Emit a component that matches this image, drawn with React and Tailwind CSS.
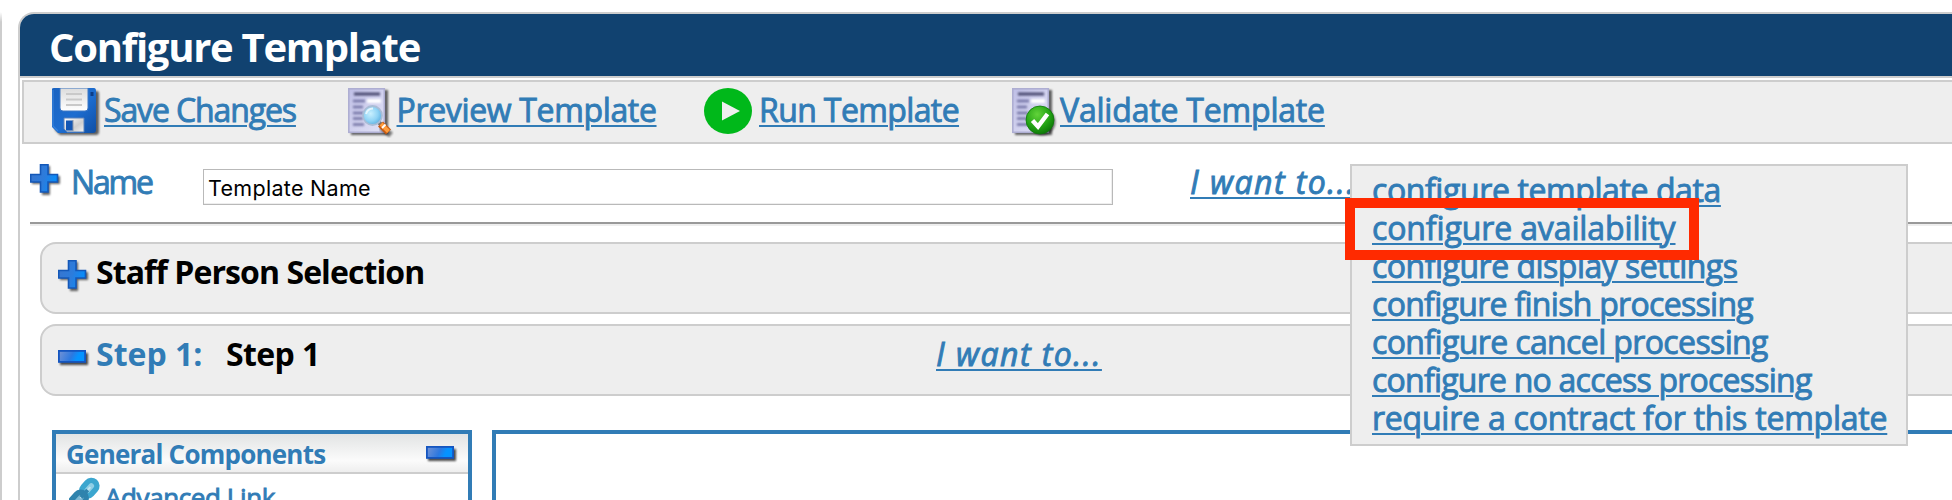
const LINK = "text-[32px] leading-[38px] text-[#317cb6] underline decoration-2 underline-offset-[3px] [-webkit-text-stroke:0.9px_#317cb6]";

function SaveIcon() {
  return (
    <svg width="50" height="50" viewBox="0 0 50 50">
      <defs>
        <linearGradient id="disk" x1="0" y1="0" x2="1" y2="1">
          <stop offset="0" stopColor="#1b63c0" /><stop offset=".55" stopColor="#1d6dd0" /><stop offset="1" stopColor="#0f4fa5" />
        </linearGradient>
        <linearGradient id="paper" x1="0" y1="0" x2="0" y2="1">
          <stop offset="0" stopColor="#dcdcdc" /><stop offset="1" stopColor="#fff" />
        </linearGradient>
        <linearGradient id="shutter" x1="0" y1="0" x2="1" y2="1">
          <stop offset="0" stopColor="#fff" /><stop offset=".6" stopColor="#cfcfcf" /><stop offset="1" stopColor="#f3f3f3" />
        </linearGradient>
        <filter id="soft" x="-20%" y="-20%" width="150%" height="150%"><feGaussianBlur stdDeviation="1.2" /></filter>
      </defs>
      <path d="M3 3H45Q47 3 47 6V44Q47 47 44 47H8L3 42Z" fill="#000" opacity=".6" filter="url(#soft)" />
      <path d="M0 1Q0 0 2 0H42Q44 0 44 3V42Q44 45 41 45H6L0 39Z" fill="url(#disk)" />
      <path d="M1 2V38L6 43" fill="none" stroke="#4a93e8" strokeWidth="1.2" opacity=".6" />
      <path d="M8 0H36V20Q36 23 33 23H11Q8 23 8 20Z" fill="url(#paper)" stroke="#3f78c4" />
      <path d="M14 6H30M14 11.500H30M14 17H30" stroke="#c9c9c9" strokeWidth="2.200" />
      <rect x="38.500" y="4" width="3" height="4" fill="#0b3c87" />
      <path d="M12 30H32V44H15L12 41Z" fill="url(#shutter)" stroke="#5a82bb" />
      <rect x="14" y="32.500" width="7" height="10" fill="#1256b4" />
      <path d="M21 32V43" stroke="#8b96a8" strokeWidth="1" />
    </svg>
  );
}

function Sheet({ id, children }) {
  return (
    <svg width="46" height="50" viewBox="0 0 46 50">
      <defs>
        <linearGradient id={`${id}-page`} x1="0" y1="0" x2="1" y2="1">
          <stop offset="0" stopColor="#bfbfe6" /><stop offset="1" stopColor="#e2e2f6" />
        </linearGradient>
        <radialGradient id={`${id}-lens`} cx=".4" cy=".4" r=".65">
          <stop offset="0" stopColor="#c9f0ff" /><stop offset=".6" stopColor="#8fd3f5" /><stop offset="1" stopColor="#5aaee0" />
        </radialGradient>
        <radialGradient id={`${id}-ball`} cx=".4" cy=".3" r=".75">
          <stop offset="0" stopColor="#62d33a" /><stop offset=".6" stopColor="#23a314" /><stop offset="1" stopColor="#0c7307" />
        </radialGradient>
        <filter id={`${id}-soft`} x="-20%" y="-20%" width="150%" height="150%"><feGaussianBlur stdDeviation="1.200" /></filter>
        <filter id={`${id}-fade`} x="-20%" y="-20%" width="150%" height="150%"><feGaussianBlur stdDeviation=".8" /></filter>
      </defs>
      <rect x="3" y="2" width="37" height="45" fill="#000" opacity=".6" filter={`url(#${id}-soft)`} />
      <rect x=".8" y=".8" width="35.500" height="43.500" fill={`url(#${id}-page)`} stroke="#aeaed2" strokeWidth="1.600" />
      <g filter={`url(#${id}-fade)`}>
        <path d="M19 13H33" stroke="#fff" strokeWidth="4" />
        <path d="M6 6H32" stroke="#4c4c70" strokeWidth="3" />
        <path d="M5 13H17M5 19H15M5 25H16M5 30.500H15M5 36.500H16" stroke="#7373a4" strokeWidth="2.400" />
      </g>
      {children}
    </svg>
  );
}

function PreviewIcon() {
  return (
    <Sheet id="preview">
      <path d="M33 39L43 47" stroke="#000" strokeWidth="6" opacity=".5" filter="url(#preview-soft)" />
      <path d="M30.500 34L33.500 37" stroke="#777" strokeWidth="4" />
      <path d="M32.500 36L40.500 44" stroke="#c75c14" strokeWidth="7" />
      <path d="M33 36L40.500 43.500" stroke="#ff9c3c" strokeWidth="4" />
      <path d="M34 40L37.500 36.500" stroke="#fff" strokeWidth="1.800" />
      <circle cx="24.500" cy="27.500" r="9.500" fill="url(#preview-lens)" stroke="#a9bdd6" strokeWidth="1.800" />
      <path d="M18 26Q19.500 20.500 25 20.500" fill="none" stroke="#fff" strokeWidth="2" opacity=".7" />
    </Sheet>
  );
}

function ValidateIcon() {
  return (
    <Sheet id="validate">
      <circle cx="30" cy="34" r="13.500" fill="#000" opacity=".5" filter="url(#validate-soft)" />
      <circle cx="28" cy="32" r="14" fill="url(#validate-ball)" stroke="#0e7a0a" strokeWidth=".8" />
      <path d="M20.500 32.500L26 38.500L35.500 26" fill="none" stroke="#fff" strokeWidth="4.400" />
    </Sheet>
  );
}

function RunIcon() {
  return (
    <svg width="48" height="46" viewBox="0 0 48 46">
      <ellipse cx="24" cy="23" rx="24" ry="23" fill="#00b81a" />
      <path d="M18 13.500L36 23L18 32.500Z" fill="#efefef" />
    </svg>
  );
}

function PlusIcon({ id }) {
  return (
    <svg width="32" height="33" viewBox="0 0 32 33" className="shrink-0">
      <defs>
        <linearGradient id={id} x1="0" y1="0" x2="1" y2=".3">
          <stop offset="0" stopColor="#3a74cc" /><stop offset=".6" stopColor="#2c7cdc" /><stop offset="1" stopColor="#0a8cf8" />
        </linearGradient>
        <filter id={`${id}-soft`} x="-20%" y="-20%" width="150%" height="150%"><feGaussianBlur stdDeviation="1.200" /></filter>
      </defs>
      <path d="M12 2H20V12H30V20H20V31H12V20H2V12H12Z" fill="#000" opacity=".6" filter={`url(#${id}-soft)`} />
      <path d="M10.500 .7H18V10.500H27.500V18H18V28H10.500V18H.7V10.500H10.500Z" fill={`url(#${id})`} stroke="#1458b8" strokeWidth="1.600" />
    </svg>
  );
}

function MinusIcon({ id }) {
  return (
    <svg width="32" height="18" viewBox="0 0 32 18" className="shrink-0">
      <defs>
        <linearGradient id={id} x1="0" y1="0" x2="1" y2=".2">
          <stop offset="0" stopColor="#7593d4" /><stop offset=".55" stopColor="#2c78e0" /><stop offset=".8" stopColor="#0593ff" />
        </linearGradient>
        <filter id={`${id}-soft`} x="-20%" y="-30%" width="150%" height="180%"><feGaussianBlur stdDeviation="1.200" /></filter>
      </defs>
      <rect x="2" y="3" width="28" height="12" fill="#000" opacity=".7" filter={`url(#${id}-soft)`} />
      <rect x=".9" y=".9" width="26.200" height="11" fill={`url(#${id})`} stroke="#1455c0" strokeWidth="1.800" />
    </svg>
  );
}

function LinkIcon() {
  return (
    <svg width="32" height="34" viewBox="0 0 32 34" className="shrink-0">
      <g fill="none" transform="rotate(-48 16 16)">
        <rect x="14" y="10.500" width="17" height="11" rx="5.500" fill="#8fcfe6" stroke="#3ba6cf" strokeWidth="5.500" />
        <rect x="-4" y="10.500" width="19" height="11" rx="5.500" fill="#7fb9d4" stroke="#2f83ad" strokeWidth="5.500" />
        <path d="M9 16H24" stroke="#bfe4f1" strokeWidth="2" />
        <path d="M10 16H20" stroke="#2f83ad" strokeWidth="4" />
      </g>
    </svg>
  );
}

const tools = [
  { label: "Save Changes", Icon: SaveIcon, group: "w-[296px]", icon: "w-[52px]", text: "tracking-[-1.12px]" },
  { label: "Preview Template", Icon: PreviewIcon, group: "w-[356px]", icon: "w-[48.5px]", text: "tracking-[-0.34px]" },
  { label: "Run Template", Icon: RunIcon, group: "w-[308px]", icon: "w-[55px]", text: "tracking-[-0.61px]" },
  { label: "Validate Template", Icon: ValidateIcon, group: "w-[340px]", icon: "w-[48px]", text: "tracking-[-0.19px]" },
];

const menu = [
  ["configure template data", "tracking-[-0.4px]"],
  ["configure availability", "tracking-[-0.12px]"],
  ["configure display settings", "tracking-[-0.5px]"],
  ["configure finish processing", "tracking-[-0.7px]"],
  ["configure cancel processing", "tracking-[-0.62px]"],
  ["configure no access processing", "tracking-[-0.77px]"],
  ["require a contract for this template", "tracking-[-0.22px]"],
];

function ActionsMenu() {
  return (
    <div className="absolute top-[164px] left-[1350px] h-[282px] w-[558px] border-2 border-[#cdcdcd] bg-[#eeeeee] pt-[5px] pl-5">
      {menu.map(([label, tracking]) => (
        <div key={label} className="flex h-[38px]"><a className={`${LINK} ${tracking}`}>{label}</a></div>
      ))}
      <div className="absolute top-[32px] left-[-7px] h-[62px] w-[354px] border-10 border-[#ff2a00]" />
    </div>
  );
}

export default function App() {
  return (
    <div className="relative flex h-[500px] w-[1952px] overflow-hidden bg-white font-['Open_Sans','Noto_Sans',sans-serif] whitespace-nowrap">
      <div className="mt-3 w-[2px] shrink-0 rounded-tr-[2px] bg-linear-to-b from-white to-[#cdcdcd] to-[10px]" />
      <main className="mt-3 ml-4 w-[1960px] shrink-0 rounded-tl-[16px] border-2 border-r-0 border-b-0 border-[#cdcdcd]">
        <header className="h-[64px] rounded-tl-[14px] border-b-2 border-[#cdcdcd] bg-[#114270] pt-[2px] pl-[29px]">
          <h1 className="text-[40px] leading-[62px] font-bold tracking-[-1.28px] text-white">Configure Template</h1>
        </header>

        <nav className="mt-[2px] ml-[2px] flex h-[64px] border-2 border-[#cdcdcd] bg-[#eeeeee] pt-[6px] pl-7">
          {tools.map(({ label, Icon, group, icon, text }) => (
            <div key={label} className={`flex ${group}`}>
              <span className={`shrink-0 ${icon}`}><Icon /></span>
              <a className={`mt-[3px] h-[38px] ${LINK} ${text}`}>{label}</a>
            </div>
          ))}
        </nav>

        <section className="ml-[10px] flex h-[78px] pt-5">
          <PlusIcon id="plus-name" />
          <span className="mt-[-1px] ml-[9px] w-[132px] text-[32px] leading-[38px] tracking-[-2.2px] text-[#317cb6] [-webkit-text-stroke:0.9px_#317cb6]">Name</span>
          <div className="mt-[5px] flex h-[36px] w-[910px] items-center border border-[#b9b9b9] pt-[2px] pl-1 font-['Inter'] text-[21.5px] tracking-[0.3px] text-black shadow-[inset_-1px_-1px_0_#eeeeee]">
            Template Name
          </div>
          <a className={`mt-[-1px] ml-[77px] italic tracking-[1.5px] ${LINK}`}>I want to...</a>
        </section>

        <div className="ml-[10px] h-1 border-t-2 border-b-2 border-t-[#999999] border-b-[#eeeeee]" />

        <section className="mt-4 ml-5 flex h-[72px] rounded-[16px] border-2 border-[#cdcdcd] bg-[#eeeeee] pt-4 pl-4">
          <PlusIcon id="plus-staff" />
          <h2 className="mt-[-7px] ml-[6px] text-[32px] leading-[38px] font-bold tracking-[-0.93px] text-black">Staff Person Selection</h2>
        </section>

        <section className="mt-[10px] ml-5 flex h-[72px] rounded-[16px] border-2 border-[#cdcdcd] bg-[#eeeeee] pt-[9px] pl-4">
          <span className="mt-[15px]"><MinusIcon id="minus-step" /></span>
          <h2 className="ml-[6px] w-[130px] text-[32px] leading-[38px] font-bold text-[#317cb6]">Step 1:</h2>
          <h2 className="w-[710px] text-[32px] leading-[38px] font-bold tracking-[-0.6px] text-black">Step 1</h2>
          <a className={`italic tracking-[1.5px] ${LINK}`}>I want to...</a>
        </section>

        <div className="mt-[34px] ml-8 flex gap-5">
          <aside className="h-[72px] w-[420px] border-4 border-b-0 border-[#317cb6]">
            <div className="flex h-10 border-b-2 border-[#cdcdcd] bg-linear-to-b from-[#e2e4e4] via-[#fbfbfb] via-70% to-[#eeeeee] pl-[10px]">
              <h3 className="w-[360px] text-[26px] leading-[41px] font-bold tracking-[-0.78px] text-[#317cb6]">General Components</h3>
              <span className="mt-3"><MinusIcon id="minus-general" /></span>
            </div>
            <div className="flex h-7 overflow-hidden pl-[13px]">
              <span className="mt-[3px]"><LinkIcon /></span>
              <a className="mt-[5px] ml-1 text-[26px] leading-[36px] tracking-[-0.4px] text-[#317cb6] [-webkit-text-stroke:0.9px_#317cb6]">Advanced Link</a>
            </div>
          </aside>
          <div className="h-[72px] grow border-4 border-r-0 border-b-0 border-[#317cb6] bg-white" />
        </div>
      </main>
      <ActionsMenu />
    </div>
  );
}
